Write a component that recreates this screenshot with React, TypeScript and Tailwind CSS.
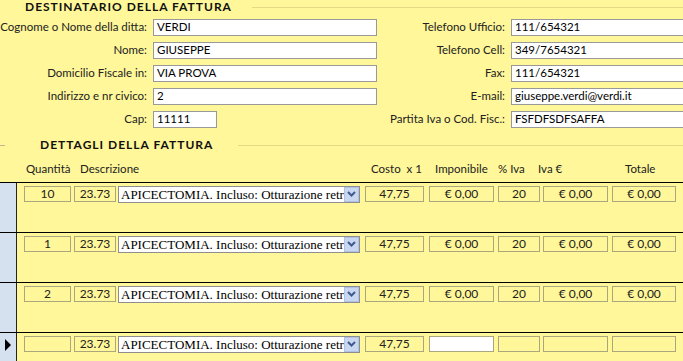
import React from 'react';

type Pair = { label: string; value: string; short?: boolean };

const leftFields: Pair[] = [
  { label: 'Cognome o Nome della ditta:', value: 'VERDI' },
  { label: 'Nome:', value: 'GIUSEPPE' },
  { label: 'Domicilio Fiscale in:', value: 'VIA PROVA' },
  { label: 'Indirizzo e nr civico:', value: '2' },
  { label: 'Cap:', value: '11111', short: true },
];

const rightFields: Pair[] = [
  { label: 'Telefono Ufficio:', value: '111/654321' },
  { label: 'Telefono Cell:', value: '349/7654321' },
  { label: 'Fax:', value: '111/654321' },
  { label: 'E-mail:', value: 'giuseppe.verdi@verdi.it' },
  { label: 'Partita Iva o Cod. Fisc.:', value: 'FSFDFSDFSAFFA' },
];

interface DetailRowProps {
  qta: string;
  current?: boolean;
  empty?: boolean;
}

const Box: React.FC<{ w: string; children?: React.ReactNode; white?: boolean }> = ({ w, children, white }) => (
  <div
    className={`${w} h-[16px] border border-[#aaa67e] flex items-center justify-center text-[12px] leading-none text-[#222] ${
      white ? 'bg-white' : ''
    }`}
  >
    {children}
  </div>
);

const DetailRow: React.FC<DetailRowProps> = ({ qta, current, empty }) => (
  <div className="flex h-[50px] border-t border-black shrink-0">
    <div className="w-[17px] bg-[#d6e1ef] border-r border-[#222] flex items-start justify-center pt-[6px]">
      {current && (
        <svg width="8" height="12" viewBox="0 0 8 12">
          <path d="M1 0 L7 6 L1 12 Z" fill="#000" />
        </svg>
      )}
    </div>
    <div className="flex items-start pt-[3px] pl-[7px]">
      <Box w="w-[47px]">{qta}</Box>
      <div className="ml-[3px]">
        <Box w="w-[42px]">23.73</Box>
      </div>
      <div className="ml-[2px] w-[242px] h-[17px] bg-white border border-[#8e8e8e] flex items-center">
        <div className="flex-1 min-w-0 overflow-hidden pl-[2px] text-[13px] leading-none text-black font-['Liberation_Serif',serif] whitespace-nowrap">
          APICECTOMIA. Incluso: Otturazione retro
        </div>
        <div className="w-[15px] h-[15px] bg-[#c9d7f1] border border-[#b0c2e6] flex items-center justify-center shrink-0">
          <svg width="9" height="6" viewBox="0 0 9 6">
            <path d="M1 1 L4.5 4.5 L8 1" stroke="#3f5a8c" strokeWidth="2" fill="none" />
          </svg>
        </div>
      </div>
      <div className="ml-[5px]">
        <Box w="w-[59px]">47,75</Box>
      </div>
      <div className="ml-[5px]">
        <Box w="w-[65px]" white={empty}>{empty ? '' : '€ 0,00'}</Box>
      </div>
      <div className="ml-[4px]">
        <Box w="w-[42px]">{empty ? '' : '20'}</Box>
      </div>
      <div className="ml-[3px]">
        <Box w="w-[65px]">{empty ? '' : '€ 0,00'}</Box>
      </div>
      <div className="ml-[4px]">
        <Box w="w-[64px]">{empty ? '' : '€ 0,00'}</Box>
      </div>
    </div>
  </div>
);

const FieldRow: React.FC<{ pair: Pair; labelW: string; inputW: string }> = ({ pair, labelW, inputW }) => (
  <div className="flex items-center h-[16px]">
    <div className={`${labelW} text-right pr-[6px] text-[11.5px] leading-none text-[#222] whitespace-nowrap`}>
      {pair.label}
    </div>
    <div
      className={`${pair.short ? 'w-[64px]' : inputW} h-[17px] bg-white border border-[#999999] flex items-center pl-[3px] text-[11.5px] leading-none text-black whitespace-nowrap`}
    >
      {pair.value}
    </div>
  </div>
);

export default function App() {
  return (
    <div className="w-[683px] h-[361px] overflow-hidden bg-[#fff799] font-['Lato',sans-serif] flex flex-col">
      <div className="flex items-center h-[14px] mt-[1px]">
        <span className="ml-[25px] text-[12px] font-bold tracking-[1px] text-[#111] leading-none">
          DESTINATARIO DELLA FATTURA
        </span>
        <div className="flex-1 ml-[20px] h-px bg-[#e3da88]" />
      </div>

      <div className="flex mt-[6px]">
        <div className="flex flex-col gap-[7px]">
          {leftFields.map((p) => (
            <FieldRow key={p.label} pair={p} labelW="w-[153px]" inputW="w-[224px]" />
          ))}
        </div>
        <div className="flex flex-col gap-[7px]">
          {rightFields.map((p) => (
            <FieldRow key={p.label} pair={p} labelW="w-[134px]" inputW="w-[180px]" />
          ))}
        </div>
      </div>

      <div className="mt-[3px] h-px bg-[#e3da88]" />

      <div className="flex items-center h-[14px] mt-[9px]">
        <div className="w-[5px] h-px bg-[#bdb88a]" />
        <span className="ml-[35px] text-[12px] font-bold tracking-[1px] text-[#111] leading-none">
          DETTAGLI DELLA FATTURA
        </span>
        <div className="flex-1 ml-[25px] h-px bg-[#e3da88]" />
      </div>

      <div className="flex items-center h-[14px] mt-[12px] text-[11.5px] leading-none text-[#222] whitespace-nowrap">
        <span className="ml-[26px] w-[54px]">Quantità</span>
        <span className="w-[291px]">Descrizione</span>
        <span className="w-[64px]">Costo&nbsp; x 1</span>
        <span className="w-[63px]">Imponibile</span>
        <span className="w-[40px]">% Iva</span>
        <span className="w-[87px]">Iva €</span>
        <span>Totale</span>
      </div>

      <div className="mt-[7px] flex flex-col">
        <DetailRow qta="10" />
        <DetailRow qta="1" />
        <DetailRow qta="2" />
        <DetailRow qta="" current empty />
      </div>
    </div>
  );
}
